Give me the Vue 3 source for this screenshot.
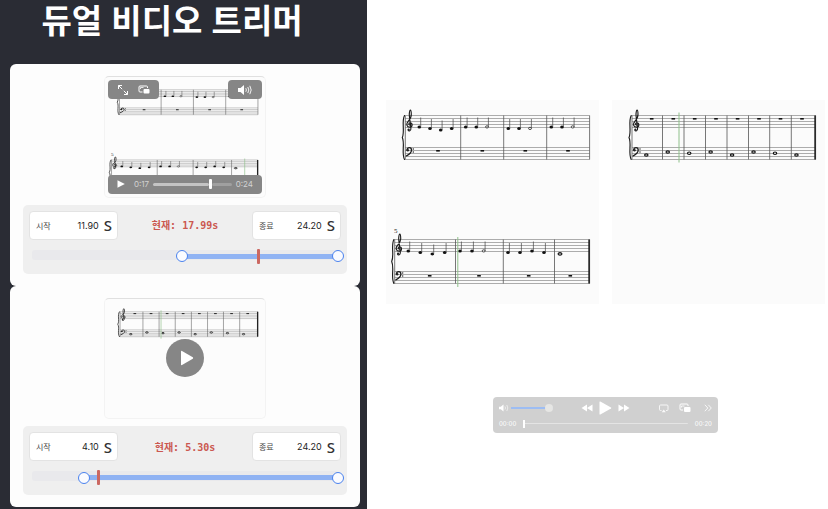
<script setup>
import { ref, reactive, computed, h } from 'vue'

const DURATION = 24.2

const quarter = (x, y) => ({ x, y, kind: 'quarter' })
const half = (x, y) => ({ x, y, kind: 'half' })
const whole = (x, y) => ({ x, y, kind: 'whole' })

const E = 11.4
const D = 12.9
const C = 14.4

const melody = [
  {
    top: 15.5,
    left: 19.3,
    bars: [74.7, 117.7, 160.7, 203.6],
    notes: [
      quarter(33.3, E), quarter(44, D), quarter(54.7, C), quarter(65.7, D),
      quarter(79.7, E), quarter(90.3, E), half(101, E),
      quarter(122.3, D), quarter(133, D), half(144, D),
      quarter(165.3, E), quarter(176, E), half(186.7, E)
    ],
    rests: [[52, 35.3], [96.3, 35.3], [139.3, 35.3], [182, 35.3]]
  },
  {
    top: 139.5,
    left: 8.7,
    number: '5',
    final: true,
    bars: [69.5, 117.3, 168.5, 203.6],
    notes: [
      quarter(22.3, E), quarter(34.3, D), quarter(46.3, C), quarter(58.7, D),
      quarter(74, E), quarter(86, E), half(97.7, E),
      quarter(122, D), quarter(134, D), quarter(146, E), quarter(158, D),
      whole(174, C)
    ],
    rests: [[43.7, 36.3], [93, 36.3], [142.7, 36.3], [184.3, 36.3]]
  }
]

const bassLine = [
  {
    top: 15.5,
    left: 20,
    final: true,
    bars: [50.5, 72, 93.5, 115, 136.5, 157.7, 179.3, 203.6],
    notes: [39.5, 36.5, 37.7, 36.5, 39.5, 36.5, 37.7, 39.5].map((y, i) => whole(34.3 + i * 21.45, y)),
    rests: [39.7, 61.3, 82.7, 104, 125.6, 147, 168.5, 190].map((x) => [x, 3.3])
  }
]

function drawSystem(s) {
  const parts = []
  const right = s.bars[s.bars.length - 1]
  for (const base of [0, 32]) {
    for (let i = 0; i < 5; i++) {
      const y = base + i * 3
      parts.push(h('line', { x1: s.left, x2: right, y1: y, y2: y, stroke: '#777', 'stroke-width': 0.6 }))
    }
  }
  for (const x of [s.left, ...s.bars]) {
    parts.push(h('line', { x1: x, x2: x, y1: 0, y2: 44, stroke: '#555', 'stroke-width': 0.8 }))
  }
  if (s.final) {
    parts.push(h('line', { x1: right - 0.5, x2: right - 0.5, y1: 0, y2: 44, stroke: '#222', 'stroke-width': 1.6 }))
  }
  const ink = { fill: 'none', stroke: '#1c1c1c', 'stroke-width': 1.15, 'stroke-linecap': 'round' }
  parts.push(h('path', {
    ...ink,
    d: 'M-.4 0C-3.6 6 .2 16-2.6 22C.2 28-3.6 38-.4 44',
    transform: `translate(${s.left - 0.4} 0)`
  }))
  parts.push(h('g', { transform: `translate(${s.left + 4.4} 0)` }, [
    h('path', {
      ...ink,
      d: 'M.4 9.6C-1.4 9.6-1.2 7.2.4 7.2C3 7.2 3.2 11.6.2 11.6C-3.400 11.6-3.600 8-1.6 6C0 4.2 1.8 2.2 1.6-1.2C1.5-7 0-6.600-.4-1.6C-.6.6.8 8 1.2 12.6C1.4 15.8-1 16-1.6 14.6'
    }),
    h('circle', { cx: -1, cy: 14, r: 1.1, fill: '#222' }),
    h('path', { ...ink, 'stroke-width': 1.3, d: 'M-2.8 34.6C-2.4 31.4 1.8 31.4 1.8 34.6C1.8 37.4-.8 39.2-3.2 40.4' }),
    h('circle', { cx: -1.9, cy: 34.8, r: 1.2, fill: '#222' }),
    h('circle', { cx: 3.6, cy: 33.5, r: 0.7, fill: '#222' }),
    h('circle', { cx: 3.6, cy: 36.5, r: 0.7, fill: '#222' })
  ]))
  for (const n of s.notes) {
    if (n.kind === 'quarter') {
      parts.push(h('ellipse', { cx: n.x, cy: n.y, rx: 1.8, ry: 1.5, fill: '#111' }))
    } else if (n.kind === 'half') {
      parts.push(h('ellipse', { cx: n.x, cy: n.y, rx: 1.5, ry: 1.1, fill: '#fff', stroke: '#222', 'stroke-width': 0.8 }))
    } else {
      parts.push(h('ellipse', { cx: n.x, cy: n.y, rx: 1.7, ry: 1.2, fill: '#fff', stroke: '#111', 'stroke-width': 1.2 }))
    }
    if (n.kind !== 'whole') {
      parts.push(h('line', { x1: n.x + 1.4, x2: n.x + 1.4, y1: n.y - 9.4, y2: n.y, stroke: '#444', 'stroke-width': 0.7 }))
    } else if (n.y === C) {
      parts.push(h('line', { x1: n.x - 2.8, x2: n.x + 2.8, y1: n.y, y2: n.y, stroke: '#444', 'stroke-width': 0.6 }))
    }
  }
  for (const [x, y] of s.rests) {
    parts.push(h('rect', { x: x - 1.8, y: y - 0.8, width: 3.6, height: 1.6, fill: '#111' }))
  }
  if (s.number) {
    parts.push(h('text', { x: s.left - 0.8, y: -7, 'font-size': 7, 'font-family': 'Liberation Serif, serif', fill: '#222' }, s.number))
  }
  return h('g', { transform: `translate(0 ${s.top})` }, parts)
}

function SheetMusic(props) {
  const lines = props.systems.map(drawSystem)
  const [x, y] = props.cursor
  return h('svg', { viewBox: '0 0 213 204', preserveAspectRatio: 'none', role: 'img', 'aria-label': props.label }, [
    ...lines,
    h('line', { x1: x, x2: x, y1: y, y2: y + 50, stroke: '#8fc08b', 'stroke-width': 1 })
  ])
}
SheetMusic.props = ['systems', 'cursor', 'label']

const clips = reactive([
  { id: 'a', start: 11.9, end: 24.2, current: 17.99, systems: melody, cursor: [186, 137], playing: true },
  { id: 'b', start: 4.1, end: 24.2, current: 5.3, systems: bassLine, cursor: [74.6, 13], playing: false }
])

const pages = [
  { id: 'p1', systems: melody, cursor: [71.8, 137] },
  { id: 'p2', systems: bassLine, cursor: [67, 12.5] }
]

const percent = (value) => `${(value / DURATION) * 100}%`
const setTime = (clip, key, event) => {
  const value = Number(event.target.value)
  if (!Number.isNaN(value)) clip[key] = Math.min(DURATION, Math.max(0, value))
}

const volume = ref(100)
const position = ref(0)
const volumeFill = computed(() => `${volume.value}%`)
</script>

<template>
  <div class="app">
    <section class="editor">
      <h1>듀얼 비디오 트리머</h1>

      <article v-for="clip in clips" :key="clip.id" class="card">
        <div class="video">
          <SheetMusic class="frame" :systems="clip.systems" :cursor="clip.cursor" label="악보" />
          <template v-if="clip.playing">
            <div class="overlay top">
              <div class="pill">
                <button type="button" aria-label="전체 화면">
                  <svg width="12" height="12" viewBox="0 0 12 12" fill="none" stroke="#fff" stroke-width="1">
                    <path d="M1.5 5V1.5H5M1.5 1.5 5.2 5.2M7 10.5h3.500V7M10.500 10.500 6.800 6.800" />
                  </svg>
                </button>
                <button type="button" aria-label="화면 속 화면">
                  <svg width="12" height="10" viewBox="0 0 12 10">
                    <path d="M4.500 7H2Q1 7 1 6V2Q1 1 2 1H8.500Q9.500 1 9.500 2V3" fill="none" stroke="#fff" />
                    <path d="M2.500 2.500h3M2.500 2.500v1.500" stroke="#fff" stroke-width=".8" fill="none" />
                    <rect x="5.500" y="4" width="6" height="4.500" rx="1" fill="#fff" />
                  </svg>
                </button>
              </div>
              <div class="pill">
                <button type="button" aria-label="음량">
                  <svg width="16" height="12" viewBox="0 0 16 12">
                    <path d="M1 4h2.500L7 1v10L3.500 8H1z" fill="#fff" />
                    <path d="M8.800 4.200Q10 6 8.800 7.800M10.800 3Q12.800 6 10.800 9M12.800 1.800Q15.600 6 12.800 10.200" fill="none" stroke="#fff" stroke-width=".9" />
                  </svg>
                </button>
              </div>
            </div>
            <div class="overlay bottom pill">
              <button type="button" aria-label="재생">
                <svg width="8" height="8" viewBox="0 0 8 8"><path d="M.5.2 7.800 4 .5 7.800z" fill="#fff" /></svg>
              </button>
              <span class="clock">0:17</span>
              <div class="scrub">
                <span class="scrub-fill"></span>
                <span class="scrub-knob"></span>
                <span class="scrub-rest"></span>
              </div>
              <span class="clock">0:24</span>
            </div>
          </template>
          <button v-else type="button" class="big-play" aria-label="재생">
            <svg width="14" height="16" viewBox="0 0 14 16"><path d="M1 1.500Q1 .5 2 1L12.800 7.300Q13.600 8 12.800 8.700L2 15Q1 15.500 1 14.500z" fill="#fff" /></svg>
          </button>
        </div>

        <div class="trim">
          <div class="fields">
            <label class="field">
              <span>시작</span>
              <input type="text" inputmode="decimal" :value="clip.start.toFixed(2)" @change="setTime(clip, 'start', $event)" />
              <b>S</b>
            </label>
            <output class="now">현재: {{ clip.current.toFixed(2) }}s</output>
            <label class="field">
              <span>종료</span>
              <input type="text" inputmode="decimal" :value="clip.end.toFixed(2)" @change="setTime(clip, 'end', $event)" />
              <b>S</b>
            </label>
          </div>
          <div class="slider">
            <div class="rail">
              <div class="range" :style="{ left: percent(clip.start), width: percent(clip.end - clip.start) }"></div>
              <div class="marker" :style="{ left: percent(clip.current) }"></div>
            </div>
            <input type="range" aria-label="시작" min="0" :max="DURATION" step="0.1" :value="clip.start" @input="setTime(clip, 'start', $event)" />
            <input type="range" aria-label="종료" min="0" :max="DURATION" step="0.1" :value="clip.end" @input="setTime(clip, 'end', $event)" />
          </div>
        </div>
      </article>
    </section>

    <main class="preview">
      <div class="pages">
        <div v-for="page in pages" :key="page.id" class="page">
          <SheetMusic :systems="page.systems" :cursor="page.cursor" label="악보" />
        </div>
      </div>

      <div class="player">
        <div class="player-row">
          <div class="volume">
            <svg width="10" height="8" viewBox="0 0 10 8">
              <path d="M0 2.700h1.800L4.500.5v7L1.800 5.300H0z" fill="#fff" />
              <path d="M6 2.500Q7 4 6 5.500M7.800 1Q9.800 4 7.800 7" fill="none" stroke="#f2f2f2" stroke-width=".8" />
            </svg>
            <div class="volume-track">
              <div class="volume-fill" :style="{ width: volumeFill }"></div>
              <input v-model="volume" type="range" min="0" max="100" aria-label="음량" />
            </div>
          </div>
          <div class="transport">
            <button type="button" aria-label="뒤로">
              <svg width="12" height="8" viewBox="0 0 12 8"><path d="M6 .5v7L.5 4zM11.500.5v7L6 4z" fill="#fff" /></svg>
            </button>
            <button type="button" aria-label="재생">
              <svg width="13" height="14" viewBox="0 0 13 14"><path d="M.5 1Q.5.2 1.300.6L12 6.400Q12.800 7 12 7.600L1.300 13.400Q.5 13.800.5 13z" fill="#fff" /></svg>
            </button>
            <button type="button" aria-label="앞으로">
              <svg width="12" height="8" viewBox="0 0 12 8"><path d="M.5.5v7L6 4zM6 .5v7L11.500 4z" fill="#fff" /></svg>
            </button>
          </div>
          <div class="extras">
            <button type="button" aria-label="에어플레이">
              <svg width="10" height="9" viewBox="0 0 10 9">
                <path d="M2.500 6.500H1.500Q.5 6.500.5 5.500V2Q.5 1 1.500 1H8Q9 1 9 2V5.500Q9 6.500 8 6.500H7" fill="none" stroke="#fafafa" stroke-width=".9" />
                <path d="M4.750 5.600 6.800 8.200H2.700z" fill="#fafafa" />
              </svg>
            </button>
            <button type="button" aria-label="화면 속 화면">
              <svg width="12" height="10" viewBox="0 0 12 10">
                <path d="M4 7H2Q1 7 1 6V2Q1 1 2 1H8Q9 1 9 2V3" fill="none" stroke="#fff" />
                <path d="M2.500 3h3M2.500 3v1.500" stroke="#fff" stroke-width=".8" fill="none" />
                <rect x="5" y="4" width="6.500" height="5" rx="1" fill="#fff" />
              </svg>
            </button>
            <button type="button" aria-label="더 보기">
              <svg width="8" height="8" viewBox="0 0 8 8"><path d="M.8.8 3.800 4 .8 7.200M4.300.8 7.300 4 4.300 7.200" fill="none" stroke="#fafafa" stroke-width=".9" /></svg>
            </button>
          </div>
        </div>
        <div class="timeline">
          <span>00:00</span>
          <input v-model="position" type="range" min="0" max="20" aria-label="재생 위치" />
          <span>00:20</span>
        </div>
      </div>
    </main>
  </div>
</template>

<style>
body {
  background: #fff;
}
</style>

<style scoped>
* {
  box-sizing: border-box;
}

.app {
  display: grid;
  grid-template-columns: 367fr 461fr;
  min-height: 100vh;
  font-family: "Inter", "Noto Sans CJK KR", sans-serif;
}

button {
  display: flex;
  align-items: center;
  justify-content: center;
  padding: 0;
  border: 0;
  background: none;
  cursor: pointer;
}

svg {
  display: block;
}

.editor {
  padding: 0 7px 0 10px;
  background: #2a2c34;
}

h1 {
  margin: 0 0 21px;
  padding-right: 26px;
  color: #fff;
  font-family: "Liberation Sans", "Noto Sans CJK KR", sans-serif;
  font-size: 33px;
  font-weight: 700;
  line-height: 43px;
  text-align: center;
}

.card {
  padding: 12px 13px;
  border-radius: 6px;
  background: #fdfdfd;
}

.video {
  position: relative;
  width: 50%;
  aspect-ratio: 4 / 3;
  margin: 0 auto 7px;
  padding-top: 4px;
  border: 1px solid #f3f3f3;
  border-top-color: #e0e0e0;
  border-radius: 5px;
  background: #fcfcfc;
}

.frame {
  width: 100%;
  height: 100%;
}

.overlay {
  position: absolute;
  left: 3px;
  right: 3px;
}

.top {
  top: 3px;
  display: flex;
  justify-content: space-between;
}

.pill {
  display: flex;
  align-items: center;
  gap: 9px;
  height: 19px;
  padding: 0 9px;
  border-radius: 4px;
  background: #868686;
}

.bottom {
  bottom: 3px;
}

.clock {
  color: #d2d2d2;
  font-size: 8px;
}

.bottom .clock:last-child {
  margin-left: -5px;
}

.scrub {
  flex: 1;
  display: flex;
  align-items: center;
  margin-left: -5px;
}

.scrub-fill {
  flex: 17;
  height: 3px;
  border-radius: 2px;
  background: #c4c4c4;
}

.scrub-knob {
  width: 3px;
  height: 10px;
  border-radius: 1px;
  background: #fff;
}

.scrub-rest {
  flex: 6;
  height: 3px;
  border-radius: 2px;
  background: #a0a0a0;
}

.big-play {
  position: absolute;
  top: 50%;
  left: 50%;
  width: 38px;
  height: 38px;
  padding-left: 3px;
  border-radius: 50%;
  background: #868686;
  transform: translate(-50%, -50%);
}

.trim {
  padding: 6px 6px 10px;
  border-radius: 5px;
  background: #efefef;
}

.fields {
  display: grid;
  grid-template-columns: 89px 1fr 89px;
  align-items: center;
}

.field {
  display: flex;
  align-items: center;
  height: 29px;
  padding: 0 5px 0 6px;
  border: 1px solid #e3e3e3;
  border-radius: 4px;
  background: #fff;
  color: #444;
  font-size: 8px;
}

.field input {
  flex: 1;
  width: 0;
  min-width: 0;
  margin-right: 5px;
  padding: 0;
  border: 0;
  background: none;
  color: #222;
  font-family: "Inter", sans-serif;
  font-size: 9px;
  text-align: right;
}

.field b {
  color: #333;
  font-family: "Noto Sans", sans-serif;
  font-size: 15px;
  font-weight: 500;
}

.now {
  padding-top: 2px;
  color: #cb5850;
  font-family: "DejaVu Sans Mono", "Noto Sans CJK KR", monospace;
  font-size: 10px;
  font-weight: 700;
  line-height: 14px;
  text-align: center;
}

.slider {
  position: relative;
  height: 14px;
  margin: 10px -3px 0;
  padding: 0 6px;
}

.rail {
  position: relative;
  height: 10px;
  border-radius: 3px;
  background: #e9e9ec;
}

.range {
  position: absolute;
  top: 4px;
  height: 5px;
  background: #8fb2f3;
}

.marker {
  position: absolute;
  top: -1px;
  z-index: 1;
  width: 3px;
  height: 15px;
  margin-left: -2px;
  border-radius: 1px;
  background: #cb6862;
}

.slider input {
  position: absolute;
  inset: 0;
  width: 100%;
  height: 13px;
  margin: 0;
  appearance: none;
  background: none;
  pointer-events: none;
}

.slider input::-webkit-slider-thumb {
  width: 12px;
  height: 12px;
  appearance: none;
  border: 1px solid #4a82ee;
  border-radius: 50%;
  background: #fafbff;
  pointer-events: auto;
}

.preview {
  padding: 100px 3px 0 19px;
}

.pages {
  display: grid;
  grid-template-columns: 1fr 1fr;
  gap: 13px;
}

.page {
  aspect-ratio: 213 / 204;
  background: #fbfbfb;
}

.page svg {
  width: 100%;
  height: 100%;
}

.player {
  width: 225px;
  margin: 93px auto 0;
  padding: 3px 6px 4px;
  border-radius: 4px;
  background: #d0d0d0;
}

.player-row {
  display: grid;
  grid-template-columns: 1fr auto 1fr;
  align-items: center;
  height: 16px;
}

.volume {
  display: flex;
  align-items: center;
  gap: 2px;
}

.volume-track {
  position: relative;
  display: flex;
  align-items: center;
  width: 42px;
  height: 8px;
}

.volume-fill {
  height: 2px;
  background: #9dbdf3;
}

.volume-track input {
  position: absolute;
  inset: 0;
  width: 100%;
  height: 8px;
  margin: 0;
  appearance: none;
  background: none;
}

.volume-track input::-webkit-slider-thumb {
  width: 8px;
  height: 8px;
  appearance: none;
  border-radius: 50%;
  background: #e6e6e4;
}

.transport {
  display: flex;
  align-items: center;
  gap: 6px;
}

.extras {
  display: flex;
  align-items: center;
  justify-content: flex-end;
  gap: 10px;
}

.extras button:last-child {
  margin-left: 3px;
}

.timeline {
  display: flex;
  align-items: center;
  gap: 7px;
  height: 13px;
  padding-top: 2px;
  color: #fafafa;
  font-size: 6px;
  font-weight: 500;
}

.timeline input {
  flex: 1;
  min-width: 0;
  height: 8px;
  margin: 0;
  appearance: none;
  background: linear-gradient(#e4e4e4, #e4e4e4) center / 100% 1px no-repeat;
}

.timeline input::-webkit-slider-thumb {
  width: 2px;
  height: 8px;
  appearance: none;
  background: #fff;
}
</style>
